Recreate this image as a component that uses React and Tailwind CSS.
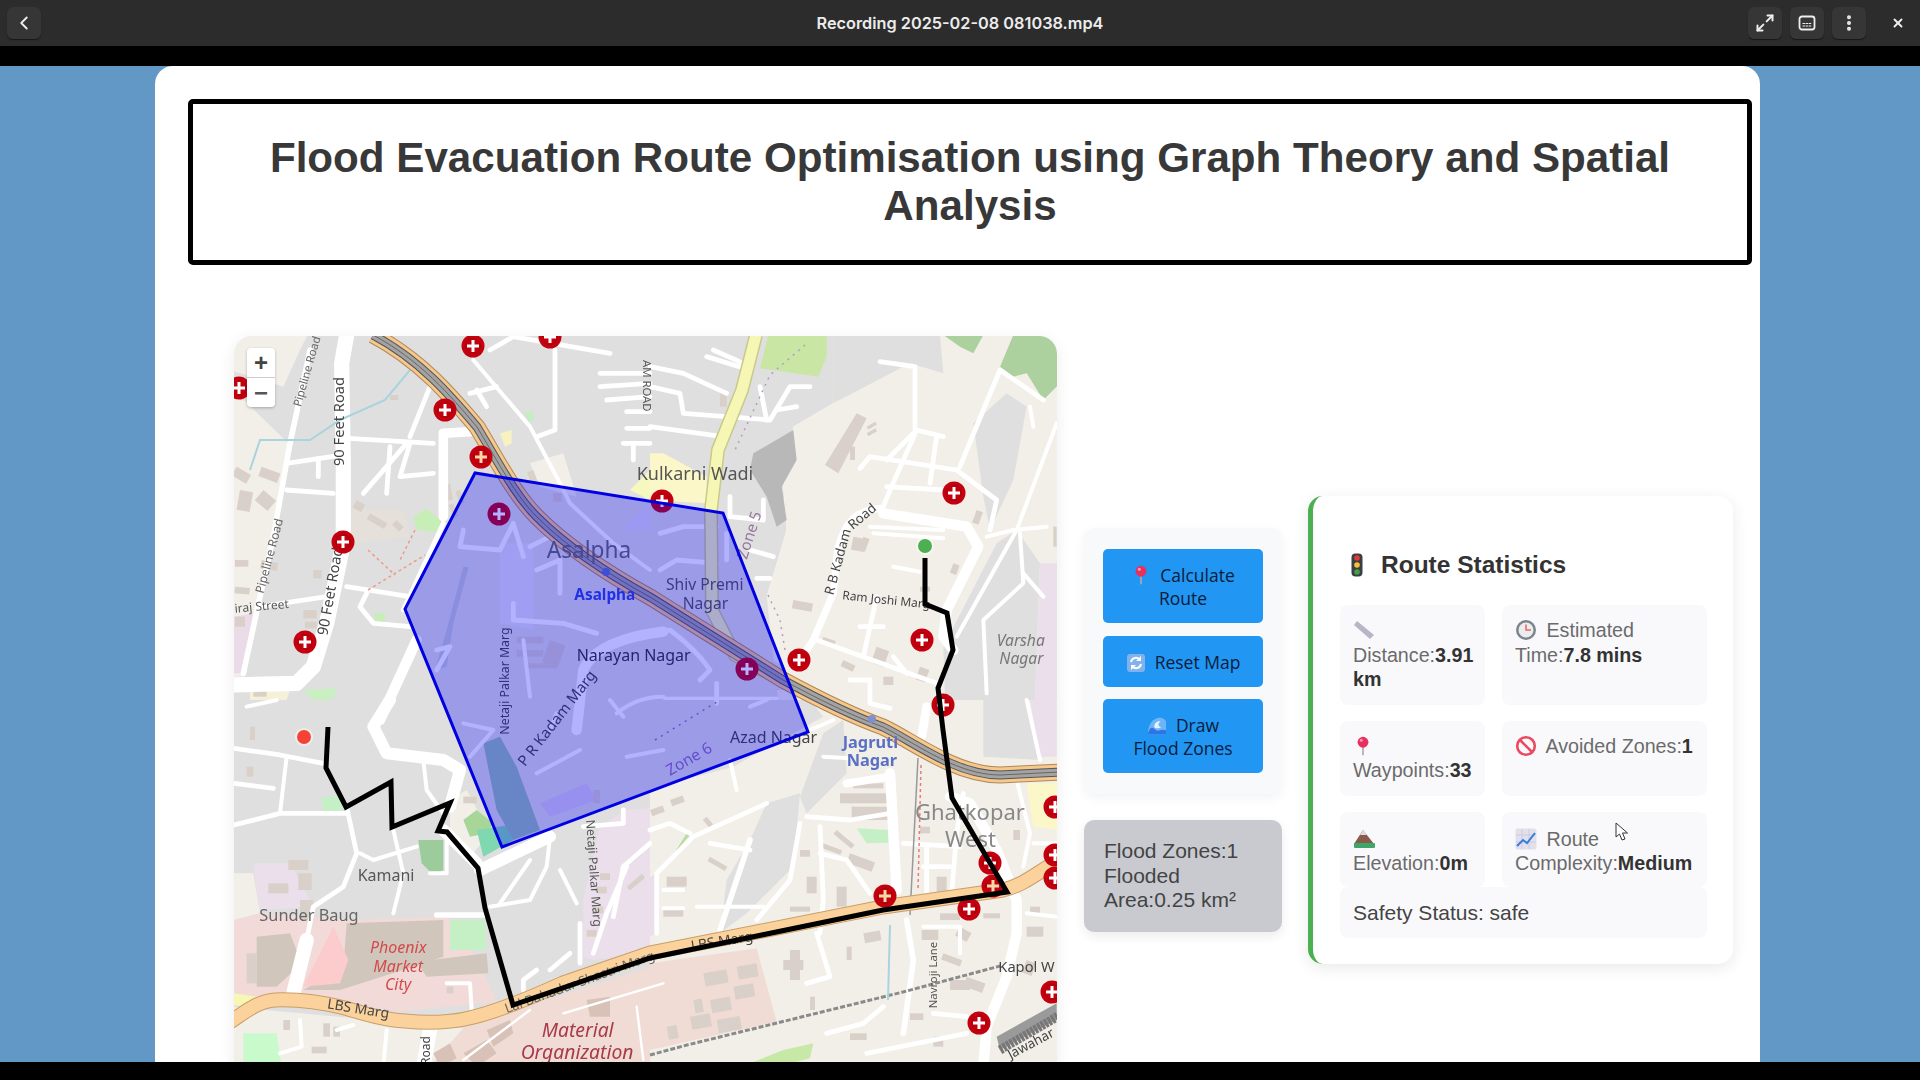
import { ChevronLeft, EllipsisVertical, Maximize2, X } from "lucide-react";

const Q1 = "translate(230 330) scale(0.33333)";
const Q2 = "translate(650 330) scale(0.33333)";
const Q3 = "translate(230 700) scale(0.33333)";
const Q4 = "translate(650 700) scale(0.33333)";

const GRAY = "#e0dfdf";
const BEIGE = "#f2efe9";
const BUILDING = "#d9d0c9";

// [points, fill] traced from the reference crops, one list per crop
const areas = {
  [Q1]: [
    ["0,0 1300,0 1300,1150 0,1150", GRAY],
    ["0,120 160,170 210,60 240,0 0,0", BEIGE],
    ["0,170 175,340 130,620 85,800 40,1040 0,1040", BEIGE],
    ["360,540 520,540 540,620 360,640", "#e6e0da"],
    ["12,860 70,850 40,1030 12,1030", "#ebdbe8"],
    ["12,1060 0,1150 1300,1150 520,1080 260,1070", GRAY],
    ["60,1075 180,1080 170,1110 60,1110", "#f5f0d8"],
    ["220,1080 320,1075 305,1115 250,1110", "#c9eec0"],
    ["550,560 590,535 635,575 620,605 560,600", "#c8eeb8"],
    ["885,250 910,240 912,270 895,275", "#c5eec0"],
    ["810,310 845,300 845,340 825,350", "#f7f2c0"],
    ["430,850 465,850 465,875 440,875", "#c8eeb8"],
    ["1200,480 1260,420 1300,420 1300,530", "#f7f7c0"],
    ["900,400 1000,370 1040,500 930,470", BEIGE],
    ["810,640 910,640 910,900 810,880", "#e4e2ec"],
    ["1170,600 1260,520 1300,520 1300,600", "#e0dced"],
    ["700,710 716,712 670,880 650,1010 615,1020 650,900", "#c4ccd0"],
  ],
  [Q2]: [
    ["0,0 560,0 550,220 430,290 400,470 410,600 350,800 400,960 420,1100 0,1100", GRAY],
    ["550,0 1250,0 1250,1250 400,1250 350,800 410,600 400,470 430,290 550,220", BEIGE],
    ["550,15 870,15 880,130 780,100 550,220", GRAY],
    ["430,300 310,370 300,420 350,500 380,590 410,570 395,470 440,390", "#b8b8b8"],
    ["355,15 530,15 530,80 505,140 330,115", "#c9e6a4"],
    ["880,15 1000,15 970,70 930,50", "#add19e"],
    ["1090,15 1240,15 1240,150 1180,210 1130,130 1090,140 1050,110", "#add19e"],
    ["0,370 40,370 170,440 170,520 0,510", "#fbf7c8"],
    ["970,280 1070,190 1130,230 1090,450 1020,600 1000,500", GRAY],
    ["1040,640 1100,600 1170,700 1150,1250 890,1250 880,950", GRAY],
    ["1170,700 1240,700 1240,1250 1150,1250", "#ecdfec"],
    ["525,405 620,250 650,265 565,430", BUILDING],
    ["-20,840 130,840 400,1010 400,1080 -20,1080", GRAY],
  ],
  [Q3]: [
    ["0,0 1300,0 1300,1100 0,1100", GRAY],
    ["70,490 180,490 250,620 90,630", "#ecdfec"],
    ["12,520 70,520 90,640 12,660", BEIGE],
    ["12,660 90,640 380,660 620,650 680,660 780,860 800,905 500,935 280,895 12,890", "#f2dad9"],
    ["80,710 180,700 215,790 140,860 80,860", "#d1c6bc"],
    ["220,870 340,800 350,670 640,660 640,770 550,800 330,870", "#d1c6bc"],
    ["560,785 770,760 775,820 590,830", "#d1c6bc"],
    ["220,860 310,680 355,780 330,850", "#fccbcb"],
    ["660,660 765,660 770,750 660,750", "#c5f0c5"],
    ["1190,330 1300,320 1300,750 1090,780 1060,770 1060,600 1110,380", "#ecdfec"],
    ["660,300 710,270 780,400 720,470 660,390", BEIGE],
    ["700,360 740,330 790,370 770,400 720,410", "#a8d598"],
    ["740,390 840,375 850,420 760,470", "#7fd8b0"],
    ["930,310 1070,250 1100,300 960,350", "#d8cfe8"],
    ["760,130 810,110 860,200 930,390 850,420 800,330", "#96c0ac"],
    ["565,420 640,420 640,510 610,525 575,490", "#9ccc9c"],
    ["275,290 330,290 340,330 280,335", "#c5f0c5"],
    ["0,920 700,985 600,1100 0,1100", BEIGE],
    ["600,1100 700,985 820,940 1300,790 1300,1100", "#f0dcd4"],
    ["40,1000 140,1000 155,1100 40,1100", "#c8facc"],
    ["12,880 110,895 40,920 12,915", "#f7f7b5"],
    ["1070,900 1140,890 1140,950 1080,950", "#d8c2b8"],
    ["770,990 840,960 850,1000 790,1040", "#d8c2b8"],
    ["700,1060 770,1020 800,1060 740,1100", "#d8c2b8"],
    ["610,1060 660,1030 680,1075 630,1100", "#d8c2b8"],
  ],
  [Q4]: [
    ["0,0 1250,0 1250,1100 0,1100", BEIGE],
    ["-50,0 480,0 520,50 250,200 -50,280", GRAY],
    ["520,100 580,60 590,220 470,340 450,290", GRAY],
    ["350,310 450,280 430,500 290,640 210,700 230,540 300,420", GRAY],
    ["1000,-10 1130,0 1170,180 1000,170", GRAY],
    ["1140,0 1220,0 1220,170 1170,170", "#ecdfec"],
    ["1130,250 1230,250 1230,390 1150,380", "#fbf7c8"],
    ["0,530 20,520 20,700 0,710", "#ecdfec"],
    ["620,385 715,390 715,428 650,430", "#c5f0c5"],
    ["0,790 320,745 380,965 0,1050", "#f0dcd4"],
    ["60,480 110,400 120,405 30,510", "#b9dca0"],
    ["300,1090 400,1050 490,1030 480,1075 420,1090", "#c8e8a8"],
    ["1040,1010 1220,910 1220,960 1050,1050", "#9a9a9a"],
  ],
};

// [d, width]
const roads = {
  [Q1]: [
    ["M350 15L335 100L340 400L340 640L315 760L290 880L250 1010L200 1060L0 1065", 38],
    ["M240 60L180 340L130 620L90 800L40 1030", 14],
    ["M170 400L340 375M170 480L310 490M355 325L610 340M530 340L400 490M480 350L470 490", 12],
    ["M540 340L510 440L610 430M600 170L540 320M265 385L265 440M350 770L540 800M90 830L290 800", 12],
    ["M640 560L640 310L720 305", 24],
    ["M640 580L520 840", 12],
    ["M560 930L450 1170", 26],
    ["M975 60L975 300L920 320M780 60L850 20L1140 70M1110 130L1260 130M1110 170L1260 160", 12],
    ["M1130 210L1260 200M1190 245L1260 245M1190 295L1260 295M1180 340L1260 340M1210 340L1210 390", 12],
    ["M730 90L900 290L990 460L1020 520L1150 640L1260 720", 10],
    ["M720 190L800 170M740 180L770 230", 12],
    ["M700 600L690 650L810 660L850 580L880 680M900 650L960 620M920 720L990 690L990 790", 12],
    ["M850 820L850 870L1000 880L1100 910M620 960L660 950L620 1020M410 790L390 830L430 880L540 890", 12],
    ["M1040 1200L1060 1020Q1100 930 1300 905", 26],
    ["M1160 1150Q1220 1100 1300 1100M880 930L900 1100M960 1200L980 1150", 10],
  ],
  [Q2]: [
    ["M0 110L100 130L230 190M0 170L90 190L100 250L360 270L420 170L480 170", 12],
    ["M0 290L220 320M170 80L300 120M190 60L280 100M330 170L350 270M380 240L440 230", 12],
    ["M690 95L795 110L795 295M710 390L800 300L880 320M800 300L720 480L700 530M630 415L660 380L920 420", 12],
    ["M920 420L1040 510L1020 600M860 320L840 460M710 470L880 480M930 410L1000 240L1050 120L1180 210", 12],
    ["M700 550L950 590L985 650L890 840L880 920L910 960", 26],
    ["M660 590L880 600M670 610L880 625M730 710L810 725", 10],
    ["M690 535Q580 540 560 680L550 790L490 930L450 990", 18],
    ["M500 930L860 1060M680 800L640 980M630 890L700 890M730 980L770 1030M600 1050L660 1050L660 1120L720 1135", 12],
    ["M1010 620L1090 600L1190 590M1220 280L1100 600L920 920M1110 610L1120 760L1000 870L1010 1090", 10],
    ["M1140 230L1150 290M1120 730L1180 800", 10],
    ["M240 500L240 560L340 570L340 510M300 660L370 680M320 745L360 745M230 610L230 690", 12],
    ["M30 610L100 590L200 590M30 720L80 690L200 700M0 910L60 900Q140 960 180 1020L150 1050M200 1060L200 1120", 12],
    ["M350 1110L300 1130", 10],
  ],
  [Q3]: [
    ["M480 0L430 80L470 160L640 180L690 210L660 320", 30],
    ["M640 390L740 490M750 510L960 410", 30],
    ["M12 145L150 165L280 190M12 250L130 265M12 375L150 340L350 340", 12],
    ["M170 170L150 340M50 20L140 0", 10],
    ["M350 320L380 460L340 560L250 620L230 720", 12],
    ["M230 720L190 880", 36],
    ["M390 460L430 480L560 440M490 390L520 520L490 640M580 180L590 270L640 340", 10],
    ["M620 645L760 645", 14],
    ["M600 520L650 520L650 420", 10],
    ["M1180 330L1180 370L1060 380M1190 500L1130 640L1090 760M1050 670L1050 790M1260 430L1180 500L1150 650", 12],
    ["M960 410L950 500L900 600L780 620M900 480L810 610M990 510L1020 570L1040 610", 10],
    ["M1020 760L960 810M880 870L880 840L920 810", 12],
    ["M700 70L790 90L720 170M1140 0L1180 50M920 220L1050 150M1190 170L1300 150", 10],
    ["M600 990L580 1100", 36],
    ["M470 990L460 1100M210 960L215 1040L150 1060M320 990L370 975M650 850L720 850L725 930", 10],
    ["M700 1080L900 930M1000 940L1300 850M1220 920L1240 1080", 6],
  ],
  [Q4]: [
    ["M720 220L740 570", 26],
    ["M590 250L720 230", 20],
    ["M470 350L600 360L720 340M450 370L420 540L320 660M510 380L520 600L510 700M510 460L590 480L660 580", 12],
    ["M350 310L130 410L20 520L20 700M180 430L300 450M0 390L60 370L120 400", 12],
    ["M300 420L210 690", 14],
    ["M40 570L100 570M40 625L100 625M140 620L230 620L340 620", 10],
    ["M830 20L815 110", 22],
    ["M900 290L960 310L1040 450L1100 600L1100 700L1070 830L1010 980L1000 1100", 26],
    ["M940 280L920 400L905 580M830 440L830 590M760 430L930 440M820 500L900 500", 12],
    ["M500 700L540 830L470 850M530 1000L640 970L700 920M650 1060L950 1000M850 940L950 950", 12],
    ["M770 660L790 780L760 1000", 14],
    ["M820 680L930 680L930 760M1130 640L1220 650M1100 240L1140 400L1120 500M1150 430L1220 430M1130 0L1170 180", 10],
    ["M480 90L550 60M240 180L260 270M520 170L600 175", 10],
  ],
};

// [x, y, w, h, rotation]
const buildings = {
  [Q1]: [
    [20, 410, 50, 30, 30], [95, 410, 60, 30, 20], [30, 480, 40, 60, 10], [100, 480, 50, 40, 40], [15, 690, 40, 20, 0],
    [15, 770, 45, 20, 5], [95, 690, 50, 25, 10], [250, 720, 25, 25, 0], [380, 510, 30, 25, 30], [420, 550, 60, 20, 30],
    [500, 570, 30, 20, 45], [15, 860, 30, 30, 0], [220, 840, 40, 25, 0], [225, 875, 35, 20, 0], [480, 195, 25, 15, 0],
    [660, 460, 50, 20, 80], [690, 480, 40, 15, 70], [910, 420, 35, 20, 70], [970, 490, 25, 25, 0], [670, 520, 40, 15, 70],
    [860, 920, 80, 20, 0], [860, 960, 80, 20, 0], [890, 1000, 90, 15, 0], [960, 930, 50, 70, 20], [70, 1080, 40, 20, 0],
  ],
  [Q2]: [
    [210, 190, 20, 40, 0], [640, 620, 20, 40, 20], [980, 540, 20, 40, 20], [910, 700, 20, 30, 20], [810, 770, 30, 15, 0],
    [430, 810, 60, 25, 10], [680, 950, 40, 50, 20], [580, 990, 40, 20, 25], [810, 1010, 30, 40, 20], [520, 920, 40, 15, 20],
    [610, 620, 40, 40, 10], [650, 290, 30, 10, -30], [650, 310, 30, 10, -30], [600, 350, 15, 40, 0], [700, 1040, 30, 25, 0],
    [1210, 590, 10, 60, 0],
  ],
  [Q3]: [
    [175, 480, 60, 30, 0], [205, 520, 40, 50, 0], [115, 550, 60, 30, 0], [210, 600, 40, 60, 0], [50, 760, 30, 90, 0],
    [50, 200, 20, 30, 0], [60, 80, 15, 40, 0], [700, 290, 40, 20, 0], [1090, 270, 20, 40, 0], [1110, 520, 30, 20, 0],
    [1100, 560, 30, 20, 0], [1090, 620, 30, 20, 0], [1070, 690, 30, 20, 0], [1180, 490, 60, 15, -40], [1190, 560, 60, 15, -40],
    [160, 960, 20, 30, 0], [280, 970, 20, 40, 0], [310, 980, 20, 30, 0], [245, 1040, 45, 20, 0], [650, 860, 20, 20, 0],
  ],
  [Q4]: [
    [0, 330, 40, 20, -20], [60, 300, 40, 20, -20], [170, 350, 30, 15, 50], [570, 280, 150, 30, 0], [605, 320, 115, 40, 0],
    [560, 390, 70, 15, 40], [600, 460, 80, 30, 20], [520, 430, 60, 15, 20], [450, 450, 30, 20, 0], [470, 530, 30, 50, 0],
    [560, 560, 30, 60, 0], [420, 620, 60, 15, 0], [640, 700, 50, 30, -10], [590, 740, 15, 40, 0], [400, 780, 60, 30, 0],
    [420, 750, 30, 90, 0], [160, 820, 70, 40, -10], [260, 800, 60, 40, -10], [180, 900, 60, 40, -10], [250, 860, 60, 40, -10],
    [120, 950, 60, 40, -10], [200, 960, 70, 40, -10], [130, 900, 25, 40, -10], [50, 980, 30, 40, -10], [480, 890, 15, 40, 0],
    [810, 380, 30, 20, 0], [1090, 390, 20, 30, 0], [815, 690, 50, 30, 0], [930, 680, 40, 30, 30], [880, 760, 60, 20, 20],
    [950, 830, 60, 30, 20], [1130, 680, 50, 30, 0], [1140, 620, 30, 20, 0], [870, 640, 60, 20, 0], [610, 250, 90, 15, 0],
    [50, 530, 60, 30, 0], [40, 630, 60, 20, 0], [180, 470, 60, 15, 30], [600, 1000, 50, 20, 0], [780, 940, 40, 20, 0],
    [860, 530, 30, 50, 0], [1000, 640, 50, 15, 0], [1130, 780, 30, 40, 20], [850, 1010, 30, 30, 0], [900, 840, 60, 30, 0],
  ],
};

const labels = [
  // [crop, text, x, y, size, fill, rotation, extra]
  [Q1, "Pipeline Road", 212, 232, 34, "#666", -74],
  [Q1, "90 Feet Road", 342, 408, 44, "#444", -90],
  [Q1, "Pipeline Road", 100, 792, 36, "#666", -75],
  [Q1, "90 Feet Road", 292, 918, 44, "#444", -80],
  [Q1, "iraj Street", 15, 848, 36, "#555", -5],
  [Q1, "Asalpha", 950, 685, 68, "#666", 0],
  [Q1, "Asalpha", 1033, 810, 46, "#2f45d8", 0, "bold"],
  [Q1, "Narayan Nagar", 1040, 992, 48, "#333", 0],
  [Q1, "AM ROAD", 1240, 90, 34, "#555", 90],
  [Q1, "Kulkarni Wadi", 1220, 450, 54, "#555", 0],
  [Q3, "Netaji Palkar Marg", 836, 104, 37, "#444", -90],
  [Q3, "P R Kadam Marg", 885, 202, 45, "#444", -52],
  [Q2, "Shiv Premi", 48, 780, 47, "#555", 0],
  [Q2, "Nagar", 98, 836, 47, "#555", 0],
  [Q2, "Zone 5", 290, 690, 46, "#97799f", -72],
  [Q2, "R B Kadam", 550, 797, 40, "#444", -75],
  [Q2, "Road", 608, 600, 40, "#444", -40],
  [Q2, "Ram Joshi Marg", 576, 808, 36, "#444", 6],
  [Q2, "Varsha", 1040, 948, 47, "#777", 0, "italic"],
  [Q2, "Nagar", 1048, 1002, 47, "#777", 0, "italic"],
  [Q3, "Kamani", 383, 542, 48, "#555", 0],
  [Q3, "Sunder Baug", 88, 664, 49, "#666", 0],
  [Q3, "Phoenix", 420, 760, 48, "#d24a4a", 0, "italic"],
  [Q3, "Market", 430, 815, 48, "#d24a4a", 0, "italic"],
  [Q3, "City", 465, 870, 48, "#d24a4a", 0, "italic"],
  [Q3, "LBS Marg", 290, 925, 42, "#444", 9],
  [Q3, "Lal Bahadur Shastri Marg", 830, 940, 40, "#666", -20],
  [Q3, "Material", 935, 1012, 58, "#a83a4a", 0, "italic"],
  [Q3, "Organization", 872, 1078, 58, "#a83a4a", 0, "italic"],
  [Q3, "Netaji Palkar Marg", 1068, 360, 37, "#555", 86],
  [Q3, "Road", 600, 1095, 36, "#444", -90],
  [Q4, "Azad Nagar", 240, 128, 48, "#444", 0],
  [Q4, "Zone 6", 60, 228, 47, "#8f6fb5", -30],
  [Q4, "Jagruti", 578, 145, 49, "#5a70c4", 0, "bold"],
  [Q4, "Nagar", 590, 197, 49, "#5a70c4", 0, "bold"],
  [Q4, "Ghatkopar", 795, 360, 66, "#888", 0],
  [Q4, "West", 885, 442, 66, "#888", 0],
  [Q4, "Kapol W", 1045, 815, 44, "#444", 0],
  [Q4, "Navroji Lane", 862, 925, 34, "#555", -90],
  [Q4, "LBS Marg", 125, 752, 42, "#444", -9],
  [Q4, "Jawahar", 1082, 1078, 40, "#444", -28],
];

// page coordinates
const hospitals = [
  [473, 346], [550, 337], [445, 410], [481, 457, 1], [239, 388], [499, 514], [343, 542], [305, 642], [662, 501], [954, 493],
  [922, 640], [799, 660], [747, 669], [943, 705], [1055, 807], [990, 863], [993, 886, 1], [969, 909], [885, 896, 1], [1055, 855],
  [1055, 878], [1052, 992], [979, 1023],
];

const HIGHWAY = "M373 335C420 360 450 395 477 427C500 465 515 495 537 517C570 550 610 575 650 597L783 680C820 700 850 715 883 727C900 735 925 752 950 763C968 771 985 775 1000 775L1060 772";
const LBS = "M230 1022C245 1012 258 1001 275 1000C300 999 320 1002 345 1008C365 1014 385 1020 405 1021C425 1023 445 1023 465 1019C490 1014 530 998 563 983L650 953L883 907L1003 890C1025 885 1040 870 1060 860";

const MapRoads = () => (
  <>
    {Object.keys(areas).map((q) => (
      <g key={q} transform={q}>
        {areas[q].map(([points, fill], i) => <polygon key={i} points={points} fill={fill} />)}
      </g>
    ))}
    {Object.keys(roads).map((q) => (
      <g key={q} transform={q}>
        {buildings[q].map(([x, y, w, h, r], i) => (
          <rect key={i} x={x} y={y} width={w} height={h} fill={BUILDING} transform={`rotate(${r} ${x} ${y})`} />
        ))}
        {roads[q].map(([d, w], i) => (
          <path key={i} d={d} fill="none" stroke="#fff" strokeWidth={w * 1.2} strokeLinecap="round" strokeLinejoin="round" />
        ))}
      </g>
    ))}
    {/* yellow road, rail, blue stream */}
    <g fill="none">
      <path d="M756 335L742 390L718 450L711 510L712 610L735 655L790 685" stroke="#c9c98a" strokeWidth="14" />
      <path d="M756 335L742 390L718 450L711 510L712 610L735 655L790 685" stroke="#f7f7b5" strokeWidth="11" />
      <path d="M250 470L260 440L310 440L340 420L385 400L410 370" stroke="#a9d3df" strokeWidth="2" />
      <path d="M650 1055L687 1045L777 1023L903 992L1000 966" stroke="#8a8a8a" strokeWidth="3" strokeDasharray="5 2" />
      <path d="M918 758L910 915" stroke="#999" strokeWidth="1.5" />
      <path d="M921 765L918 890" stroke="#e87a7a" strokeWidth="1.5" strokeDasharray="3 3" />
      <path d="M890 925L888 1000" stroke="#a9d3df" strokeWidth="2" />
      <path d="M1000 1050L1060 1015" stroke="#777" strokeWidth="9" strokeDasharray="3 1" />
      <path d="M368 550L395 575M368 590L425 555M415 530L400 560" stroke="#ee9a90" strokeWidth="1.5" strokeDasharray="3 3" />
      <path d="M805 345L770 375L735 450" stroke="#b59ac0" strokeWidth="1.5" strokeDasharray="2 5" />
      <path d="M768 595L780 620L785 650" stroke="#b59ac0" strokeWidth="1.5" strokeDasharray="2 5" />
      <path d="M655 740L720 700" stroke="#8a78b8" strokeWidth="1.5" strokeDasharray="2 5" />
    </g>
    {/* highway and LBS Marg */}
    <g fill="none">
      <path d={LBS} stroke="#c99e68" strokeWidth="15" />
      <path d={LBS} stroke="#fbd29c" strokeWidth="13" />
      <path d={HIGHWAY} stroke="#b0885a" strokeWidth="17" />
      <path d={HIGHWAY} stroke="#f6c88c" strokeWidth="15" />
      <path d={HIGHWAY} stroke="#555" strokeWidth="9" />
      <path d={HIGHWAY} stroke="#a3a3a3" strokeWidth="7" />
      <path d={HIGHWAY} stroke="#666" strokeWidth="1" />
      <circle cx="606" cy="572" r="4" fill="#5a70c4" />
      <circle cx="872" cy="719" r="4" fill="#7f90d0" />
    </g>
  </>
);

const MapLabels = () => (
  <g fontFamily="'Noto Sans', sans-serif">
    {labels.map(([q, text, x, y, size, fill, rot, extra], i) => (
      <g key={i} transform={q}>
        <text
          x={x}
          y={y}
          fontSize={size}
          fill={fill}
          fontWeight={extra === "bold" ? 700 : 400}
          fontStyle={extra === "italic" ? "italic" : "normal"}
          transform={rot ? `rotate(${rot} ${x} ${y})` : undefined}
        >
          {text}
        </text>
      </g>
    ))}
  </g>
);

const RouteMap = () => (
  <div className="relative w-[823px] h-[788px] shrink-0 rounded-[18px] overflow-hidden shadow-[0_4px_16px_rgba(0,0,0,0.08)]">
    <svg viewBox="234 336 823 788" width="823" height="788" className="block blur-[0.6px]">
      <MapRoads />
      <MapLabels />
      {hospitals.map(([x, y, tint], i) => (
        <g key={i}>
          <circle cx={x} cy={y} r="11.5" fill="#c4000f" />
          <circle cx={x} cy={y} r="7.5" fill="none" stroke="#a80010" strokeWidth="1" />
          <path d={`M${x - 6} ${y}H${x + 6}M${x} ${y - 6}V${y + 6}`} stroke={tint ? "#f8d8a8" : "#fff"} strokeWidth="3" />
        </g>
      ))}
      <polygon points="475,473 405,609 502,847 808,732 723,513" fill="#0000ff" fillOpacity="0.3" stroke="#0000e0" strokeWidth="3" />
      <path
        d="M328 727L326 768L346 807L391 782L392 827L450 803L438 831L447 832L478 868L485 908L513 1005L650 958L883 910L1007 892L952 798L943 730L938 688L953 650L947 613L925 604L925 558"
        fill="none"
        stroke="#000"
        strokeWidth="5"
      />
      <circle cx="925" cy="546" r="9" fill="#fff" fillOpacity="0.5" />
      <circle cx="925" cy="546" r="7" fill="#4caf50" />
      <circle cx="304" cy="737" r="9" fill="#fff" fillOpacity="0.5" />
      <circle cx="304" cy="737" r="7" fill="#f44336" />
    </svg>
    <div className="absolute left-[13px] top-[12px] w-[28px] rounded-[4px] bg-white shadow-[0_1px_3px_rgba(0,0,0,0.25)] text-[#444] font-['Liberation_Sans',sans-serif] font-bold text-[24px] leading-[29px] text-center">
      <div className="h-[30px] border-b border-[#ccc]">+</div>
      <div className="h-[29px] text-[#555]">−</div>
    </div>
  </div>
);

const PinIcon = () => (
  <svg viewBox="0 0 20 24" className="inline-block w-[20px] h-[20px] align-[-3px]">
    <path d="M10 12V23" stroke="#b0a8b0" strokeWidth="2" />
    <circle cx="10" cy="7.5" r="6.5" fill="#e8305c" />
    <circle cx="8" cy="5" r="1.8" fill="#ff9ab0" />
  </svg>
);

const RefreshIcon = () => (
  <svg viewBox="0 0 20 20" className="inline-block w-[20px] h-[20px] align-[-4px]">
    <rect x="1" y="1" width="18" height="18" rx="3" fill="#7fb2ee" />
    <path d="M5 9a5 5 0 0 1 9-2M15 11a5 5 0 0 1-9 2" fill="none" stroke="#fff" strokeWidth="2" />
    <path d="M15 3v5h-5M5 17v-5h5" fill="#fff" />
  </svg>
);

const WaveIcon = () => (
  <svg viewBox="0 0 22 20" className="inline-block w-[20px] h-[20px] align-[-4px]">
    <path d="M1 19C1 8 7 1 14 1c4 0 6 2 7 4v14z" fill="#6db5f8" />
    <path d="M1 19C2 15 3 13 5 12c3-1 4 4 8 3s6-1 8 0v4z" fill="#2f74e6" />
    <path d="M8 11c0-4 3-7 7-6-2 1-3 3-2 5 1 1 2 1 3 1-3 2-7 2-8 0z" fill="#e6f3ff" />
  </svg>
);

const TrafficIcon = () => (
  <svg viewBox="0 0 12 24" className="inline-block w-[12px] h-[24px]">
    <rect x="0.5" y="0.5" width="11" height="23" rx="4" fill="#3a3f45" />
    <circle cx="6" cy="5" r="2.8" fill="#e53935" />
    <circle cx="6" cy="12" r="2.8" fill="#fbc02d" />
    <circle cx="6" cy="19" r="2.8" fill="#43a047" />
  </svg>
);

const RulerIcon = () => (
  <svg viewBox="0 0 22 20" className="inline-block w-[22px] h-[20px] align-[-3px]">
    <path d="M4 1L21 15L17 19L1 5Z" fill="#b9b4c8" />
  </svg>
);

const ClockIcon = () => (
  <svg viewBox="0 0 22 22" className="inline-block w-[22px] h-[22px] align-[-4px]">
    <circle cx="11" cy="11" r="10" fill="#7b858c" />
    <circle cx="11" cy="11" r="7.5" fill="#ecebf0" />
    <path d="M11 5.5V11H16" fill="none" stroke="#e26a5c" strokeWidth="1.5" />
  </svg>
);

const BanIcon = () => (
  <svg viewBox="0 0 22 22" className="inline-block w-[22px] h-[22px] align-[-4px]">
    <circle cx="11" cy="11" r="8.8" fill="none" stroke="#ea4a62" strokeWidth="2.6" />
    <path d="M5 5L17 17" stroke="#ea4a62" strokeWidth="2.6" />
  </svg>
);

const MountainIcon = () => (
  <svg viewBox="0 0 22 20" className="inline-block w-[22px] h-[20px] align-[-3px]">
    <path d="M1 15L10 1L21 15Z" fill="#8a5a4a" />
    <path d="M7 6L10 1L14 6Z" fill="#dfdde2" />
    <rect x="1" y="14" width="21" height="5" rx="1" fill="#3fa66a" />
  </svg>
);

const ChartIcon = () => (
  <svg viewBox="0 0 22 22" className="inline-block w-[22px] h-[22px] align-[-4px]">
    <rect x="0.5" y="0.5" width="21" height="21" rx="2" fill="#e3e0ec" />
    <path d="M7 1V21M14 1V21M1 7H21M1 14H21" stroke="#cfcadb" />
    <path d="M2 18L8 12L12 15L20 5" fill="none" stroke="#2f7fe0" strokeWidth="2" />
  </svg>
);

const CursorIcon = () => (
  <svg viewBox="0 0 14 20" className="w-[14px] h-[20px]">
    <path d="M1 1V15L4.5 12L7 18L10 17L7.5 11H12.5Z" fill="#fff" stroke="#333" strokeWidth="1" />
  </svg>
);

const HeaderButton = ({ children }) => (
  <button className="w-[34px] h-[32px] flex items-center justify-center rounded-[6px] bg-[#363636] text-[#eee] shadow-[0_1px_1px_rgba(0,0,0,0.5)]">
    {children}
  </button>
);

const TopBar = () => (
  <div className="h-[46px] shrink-0 flex items-center justify-between pl-[7px] pr-[15px] bg-[#2c2c2c] relative">
    <HeaderButton>
      <ChevronLeft size={22} strokeWidth={2} />
    </HeaderButton>
    <div className="absolute inset-x-0 text-center text-[16.3px] font-semibold text-[#ececec] font-['Inter',sans-serif] pointer-events-none">
      Recording 2025-02-08 081038.mp4
    </div>
    <div className="flex items-center gap-[8px]">
      <HeaderButton>
        <Maximize2 size={20} strokeWidth={2.4} />
      </HeaderButton>
      <HeaderButton>
        <svg viewBox="0 0 18 18" className="w-[18px] h-[18px]" fill="none" stroke="currentColor">
          <rect x="1.5" y="2.5" width="15" height="13" rx="2.5" strokeWidth="1.8" />
          <path d="M4.5 9.5H13.5M4.5 12H13.5" strokeWidth="1.2" strokeDasharray="2.5 0.6" />
        </svg>
      </HeaderButton>
      <HeaderButton>
        <EllipsisVertical size={20} strokeWidth={2.8} />
      </HeaderButton>
      <div className="w-[31px] flex justify-end text-[#eee]">
        <X size={14} strokeWidth={3.2} />
      </div>
    </div>
  </div>
);

const ActionButton = ({ icon, children }) => (
  <button className="w-full rounded-[5px] bg-[#2196f3] px-[20px] pt-[15px] pb-[13px] text-center text-[17.5px] leading-[23px] text-[#0c1c3a] font-['Open_Sans',sans-serif]">
    <span className="mr-[9px]">{icon}</span>
    {children}
  </button>
);

const StatCell = ({ icon, label, value, last, children }) => (
  <div className={`relative rounded-[8px] bg-[#f9f9fb] pl-[13px] pr-[8px] text-[19.7px] leading-[24.5px] text-[#6b6b6b] ${last ? "pt-[15px] pb-[11px]" : "py-[13px]"}`}>
    <span className="mr-[4px]">{icon}</span> {label}:<strong className="text-[#333]">{value}</strong>
    {children}
  </div>
);

const StatsPanel = () => (
  <div className="w-[425px] shrink-0 rounded-[15px] border-l-[5px] border-[#4caf50] bg-white pl-[27px] pr-[26px] pt-[55px] pb-[26px] shadow-[0_4px_16px_rgba(0,0,0,0.09)] font-['Liberation_Sans',sans-serif]">
    <h3 className="flex items-center gap-[18px] pl-[11px] text-[24.5px] leading-[28px] font-bold text-[#333]">
      <TrafficIcon />
      Route Statistics
    </h3>
    <div className="mt-[26px] grid grid-cols-[145px_205px] gap-x-[17px] gap-y-[16px]">
      <StatCell icon={<RulerIcon />} label="Distance" value="3.91 km" />
      <StatCell icon={<ClockIcon />} label="Estimated Time" value="7.8 mins" />
      <StatCell icon={<PinIcon />} label="Waypoints" value="33" />
      <StatCell icon={<BanIcon />} label="Avoided Zones" value="1" />
      <StatCell icon={<MountainIcon />} label="Elevation" value="0m" last />
      <StatCell icon={<ChartIcon />} label="Route Complexity" value="Medium" last>
        <div className="absolute left-[113px] top-[10px]">
          <CursorIcon />
        </div>
      </StatCell>
    </div>
    <div className="rounded-[8px] bg-[#f9f9fb] px-[13px] py-[13px] text-[21px] leading-[25px] text-[#444]">
      Safety Status: safe
    </div>
  </div>
);

export default function App() {
  return (
    <div className="h-screen flex flex-col bg-black overflow-hidden font-['Liberation_Sans',sans-serif]">
      <TopBar />
      <div className="flex-1 min-h-0 mt-[20px] mb-[18px] bg-[#6298c6] pl-[155px] pr-[160px]">
        <div className="h-full overflow-hidden rounded-t-[18px] bg-white pl-[33px] pr-[8px] pt-[33px]">
          <div className="h-[166px] flex items-center justify-center rounded-[5px] border-[5px] border-black px-[30px]">
            <h1 className="text-center text-[42.15px] leading-[48px] font-bold text-[#383838]">
              Flood Evacuation Route Optimisation using Graph Theory and Spatial Analysis
            </h1>
          </div>
          <div className="mt-[71px] ml-[46px] flex items-center">
            <RouteMap />
            <div className="ml-[27px] w-[198px] shrink-0 flex flex-col gap-[26px]">
              <div className="rounded-[10px] bg-[#f8f9fb] px-[19px] py-[21px] flex flex-col gap-[12.5px] shadow-[0_4px_12px_rgba(0,0,0,0.05)]">
                <ActionButton icon={<PinIcon />}>Calculate Route</ActionButton>
                <ActionButton icon={<RefreshIcon />}>Reset Map</ActionButton>
                <ActionButton icon={<WaveIcon />}>Draw Flood Zones</ActionButton>
              </div>
              <div className="rounded-[10px] bg-[#c8cad0] px-[20px] py-[19px] text-[21px] leading-[24.5px] text-[#444] shadow-[0_4px_12px_rgba(0,0,0,0.08)]">
                Flood Zones:1
                <br />
                Flooded Area:0.25 km²
              </div>
            </div>
            <div className="ml-[26px]">
              <StatsPanel />
            </div>
          </div>
        </div>
      </div>
    </div>
  );
}
